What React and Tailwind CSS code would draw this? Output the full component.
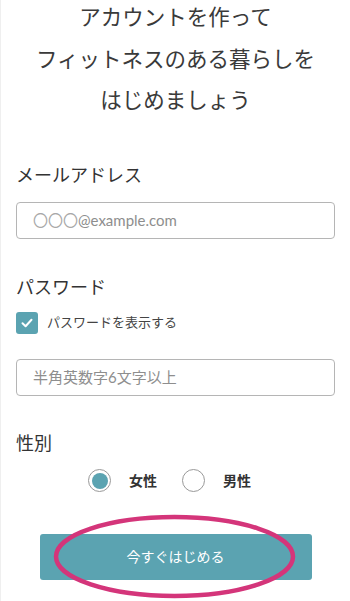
import React from "react";

export default function App() {
  const font = { fontFamily: "Lato, 'Noto Sans CJK JP', sans-serif" };
  return (
    <div
      className="relative w-[350px] h-[601px] overflow-hidden bg-white border-l border-[#efefef] text-[#333]"
      style={font}
    >
      <div className="flex flex-col px-[15px]">
        <div className="mt-[-3px] text-center text-[21.5px] leading-[41.5px] text-[#3a3a3a]">
          <div>アカウントを作って</div>
          <div>フィットネスのある暮らしを</div>
          <div>はじめましょう</div>
        </div>

        <div className="mt-[41px] text-[18px] leading-[24px]">メールアドレス</div>
        <div className="mt-[15px] h-[37px] rounded-[4px] border border-[#b5b5b5] flex items-center pl-[16px] text-[15px] text-[#8e8e8e]">
          <span className="text-[#a8a8a8]">〇〇〇</span>@example.com
        </div>

        <div className="mt-[36px] text-[18px] leading-[24px]">パスワード</div>
        <div className="mt-[13px] flex items-center h-[23px]">
          <div className="w-[22px] h-[22px] rounded-[3px] bg-[#5ba3b1] flex items-center justify-center">
            <svg width="14" height="14" viewBox="0 0 14 14" fill="none">
              <path d="M2.5 7.2 L5.6 10.2 L11.5 3.8" stroke="white" strokeWidth="2" strokeLinecap="round" strokeLinejoin="round" />
            </svg>
          </div>
          <span className="ml-[9px] text-[13px] text-[#444]">パスワードを表示する</span>
        </div>
        <div className="mt-[24px] h-[37px] rounded-[4px] border border-[#b5b5b5] flex items-center pl-[16px] text-[15px] text-[#8e8e8e]">
          半角英数字6文字以上
        </div>

        <div className="mt-[35px] text-[18px] leading-[24px]">性別</div>
        <div className="mt-[14px] h-[24px] flex items-center ml-[72px]">
          <div className="w-[23px] h-[23px] rounded-full border border-[#999] flex items-center justify-center">
            <div className="w-[16px] h-[16px] rounded-full bg-[#5ba3b1]" />
          </div>
          <span className="ml-[18px] text-[14px] font-bold text-[#333]">女性</span>
          <div className="ml-[25px] w-[23px] h-[23px] rounded-full border border-[#999]" />
          <span className="ml-[18px] text-[14px] font-bold text-[#333]">男性</span>
        </div>

        <div className="mt-[41px] mx-auto w-[272px] h-[46px] rounded-[3px] bg-[#5ba3b1] flex items-center justify-center text-white text-[14px]">
          今すぐはじめる
        </div>
      </div>

      <svg
        className="absolute left-0 top-0 pointer-events-none"
        width="350"
        height="601"
        viewBox="0 0 350 601"
      >
        <ellipse cx="173.5" cy="556.5" rx="118.5" ry="39.5" fill="none" stroke="#d4357a" strokeWidth="4.5" />
      </svg>
    </div>
  );
}
